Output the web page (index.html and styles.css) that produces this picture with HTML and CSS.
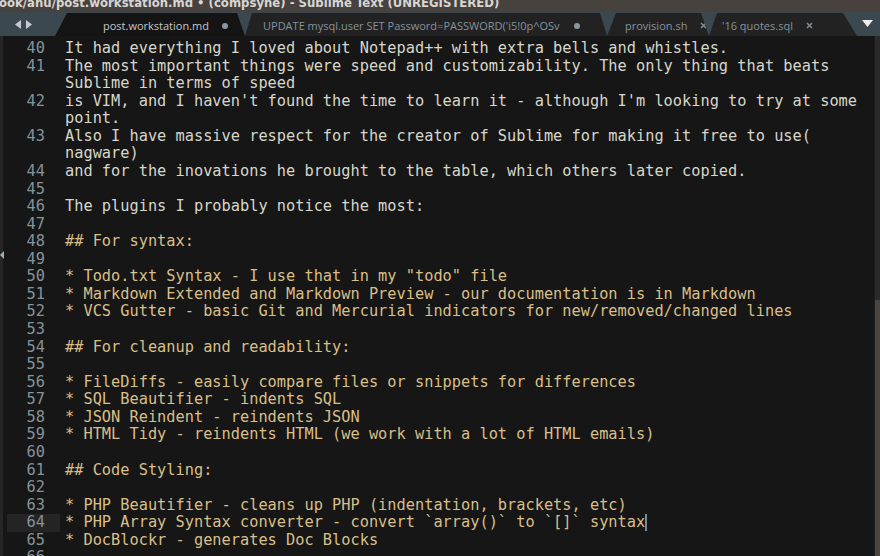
FILE: index.html
```html
<!DOCTYPE html>
<html lang="en">
<head>
<meta charset="utf-8">
<title>post.workstation.md - Sublime Text</title>
<link rel="stylesheet" href="styles.css">
</head>
<body>
<div class="window">
  <div class="titlebar"><span class="title">ook/anu/post.workstation.md • (compsyne) - Sublime Text (UNREGISTERED)</span></div>
  <div class="tabbar">
    <div class="nav">
      <svg width="20" height="10" viewBox="0 0 20 10"><polygon points="7,0 7,9 1,4.5" fill="#c3cbd0"/><polygon points="12,0 12,9 18,4.5" fill="#c3cbd0"/></svg>
    </div>
    <div class="tab t1 active"><span class="label">post.workstation.md</span><span class="dot"></span></div>
    <div class="tab t2"><span class="label">UPDATE mysql.user SET Password=PASSWORD('i5!0p^OSv</span><span class="dot"></span></div>
    <div class="tab t3"><span class="label">provision.sh</span><svg class="close" width="7" height="7" viewBox="0 0 7 7"><path d="M1 1L6 6M6 1L1 6" stroke="#7e8d96" stroke-width="1.6"/></svg></div>
    <div class="tab t4"><span class="label">'16 quotes.sql</span><svg class="close" width="7" height="7" viewBox="0 0 7 7"><path d="M1 1L6 6M6 1L1 6" stroke="#7e8d96" stroke-width="1.6"/></svg></div>
    <div class="menu">
      <svg width="11" height="8" viewBox="0 0 11 8"><polygon points="0,0 11,0 5.5,7" fill="#eef0f0"/></svg>
    </div>
  </div>
  <div class="main">
    <div class="leftedge"><span class="fold"></span></div>
    <div class="editor">
      <div class="row plain"><span class="ln">40</span><span class="code">It had everything I loved about Notepad++ with extra bells and whistles.</span></div>
      <div class="row plain"><span class="ln">41</span><span class="code">The most important things were speed and customizability. The only thing that beats</span></div>
      <div class="row plain"><span class="ln"></span><span class="code">Sublime in terms of speed</span></div>
      <div class="row plain"><span class="ln">42</span><span class="code">is VIM, and I haven't found the time to learn it - although I'm looking to try at some</span></div>
      <div class="row plain"><span class="ln"></span><span class="code">point.</span></div>
      <div class="row plain"><span class="ln">43</span><span class="code">Also I have massive respect for the creator of Sublime for making it free to use(</span></div>
      <div class="row plain"><span class="ln"></span><span class="code">nagware)</span></div>
      <div class="row plain"><span class="ln">44</span><span class="code">and for the inovations he brought to the table, which others later copied.</span></div>
      <div class="row plain"><span class="ln">45</span><span class="code"></span></div>
      <div class="row plain"><span class="ln">46</span><span class="code">The plugins I probably notice the most:</span></div>
      <div class="row plain"><span class="ln">47</span><span class="code"></span></div>
      <div class="row md"><span class="ln">48</span><span class="code">## For syntax:</span></div>
      <div class="row md"><span class="ln">49</span><span class="code"></span></div>
      <div class="row md"><span class="ln">50</span><span class="code">* Todo.txt Syntax - I use that in my "todo" file</span></div>
      <div class="row md"><span class="ln">51</span><span class="code">* Markdown Extended and Markdown Preview - our documentation is in Markdown</span></div>
      <div class="row md"><span class="ln">52</span><span class="code">* VCS Gutter - basic Git and Mercurial indicators for new/removed/changed lines</span></div>
      <div class="row md"><span class="ln">53</span><span class="code"></span></div>
      <div class="row md"><span class="ln">54</span><span class="code">## For cleanup and readability:</span></div>
      <div class="row md"><span class="ln">55</span><span class="code"></span></div>
      <div class="row md"><span class="ln">56</span><span class="code">* FileDiffs - easily compare files or snippets for differences</span></div>
      <div class="row md"><span class="ln">57</span><span class="code">* SQL Beautifier - indents SQL</span></div>
      <div class="row md"><span class="ln">58</span><span class="code">* JSON Reindent - reindents JSON</span></div>
      <div class="row md"><span class="ln">59</span><span class="code">* HTML Tidy - reindents HTML (we work with a lot of HTML emails)</span></div>
      <div class="row md"><span class="ln">60</span><span class="code"></span></div>
      <div class="row md"><span class="ln">61</span><span class="code">## Code Styling:</span></div>
      <div class="row md"><span class="ln">62</span><span class="code"></span></div>
      <div class="row md"><span class="ln">63</span><span class="code">* PHP Beautifier - cleans up PHP (indentation, brackets, etc)</span></div>
      <div class="row md current"><span class="ln">64</span><span class="code">* PHP Array Syntax converter - convert `array()` to `[]` syntax<span class="caret"></span></span></div>
      <div class="row md"><span class="ln">65</span><span class="code">* DocBlockr - generates Doc Blocks</span></div>
      <div class="row md"><span class="ln">66</span><span class="code"></span></div>
    </div>
    <div class="scrollbar"><div class="track"></div><div class="thumb"></div></div>
  </div>
</div>
</body>
</html>
```

FILE: styles.css
```css
html, body {
  margin: 0;
  padding: 0;
  background: #161616;
}
.window {
  width: 880px;
  height: 556px;
  overflow: hidden;
  display: flex;
  flex-direction: column;
  background: #161616;
}
.titlebar {
  height: 12px;
  flex: 0 0 12px;
  overflow: hidden;
  background: #48423e;
  white-space: nowrap;
}
.title {
  display: block;
  margin-top: -4px;
  margin-left: -1px;
  font-family: "DejaVu Sans", sans-serif;
  font-weight: bold;
  font-size: 11.7px;
  line-height: 14px;
  color: #d6d6d4;
}
.tabbar {
  height: 24px;
  flex: 0 0 24px;
  display: flex;
  align-items: flex-end;
  background: #3c4850;
}
.nav {
  width: 55px;
  height: 24px;
  flex: 0 0 55px;
  display: flex;
  align-items: center;
  padding-left: 14px;
  padding-top: 1px;
  box-sizing: border-box;
}
.nav svg { display: block; }
.tab {
  height: 23px;
  box-sizing: border-box;
  display: flex;
  align-items: center;
  padding-top: 2px;
  background: #222222;
  font-family: "Open Sans", sans-serif;
  font-size: 11px;
  color: #85939c;
  white-space: nowrap;
  overflow: hidden;
  clip-path: polygon(9px 0, calc(100% - 8px) 0, 100% 100%, 0 100%);
}
.tab.active {
  background: #141414;
  color: #c6c6c6;
}
.t1 { width: 190px; flex: 0 0 190px; padding-left: 48px; clip-path: polygon(12px 0, calc(100% - 8px) 0, 100% 100%, 0 100%); }
.t2 { width: 362px; flex: 0 0 362px; padding-left: 18px; clip-path: polygon(7px 0, calc(100% - 7px) 0, 100% 100%, 0 100%); }
.t3 { width: 102px; flex: 0 0 102px; padding-left: 18px; }
.t4 { width: 148px; flex: 0 0 148px; padding-left: 13px; clip-path: polygon(8px 0, calc(100% - 14px) 0, 100% 100%, 0 100%); }
.dot {
  width: 6px;
  height: 6px;
  border-radius: 50%;
  background: #8598a6;
  margin-left: 13px;
}
.t2 .dot { margin-left: 14px; }
.close { margin-left: 13px; display: block; }
.menu {
  flex: 1;
  height: 24px;
  display: flex;
  align-items: center;
  padding-left: 5px;
  padding-bottom: 1px;
  box-sizing: border-box;
}
.menu svg { display: block; }
.main {
  flex: 1;
  display: flex;
  min-height: 0;
}
.leftedge {
  width: 3px;
  flex: 0 0 3px;
  background: #262626;
  position: relative;
}
.fold {
  position: absolute;
  left: 0;
  top: 215px;
  width: 0;
  height: 0;
  border-top: 4px solid transparent;
  border-bottom: 4px solid transparent;
  border-right: 4px solid #9db0bc;
}
.editor {
  flex: 1;
  padding-top: 4px;
  padding-left: 4px;
  overflow: hidden;
  font-family: "DejaVu Sans Mono", monospace;
  font-size: 15.3px;
  line-height: 17.57px;
}
.row {
  display: flex;
  height: 17.57px;
  white-space: pre;
}
.ln {
  width: 53px;
  flex: 0 0 53px;
  box-sizing: border-box;
  padding-right: 15px;
  text-align: right;
  color: #84939b;
}
.current .ln { background: #242424; }
.code { padding-left: 5px; }
.plain .code { color: #d6d6cb; }
.md .code { color: #d9bf88; }
.caret {
  display: inline-block;
  width: 2px;
  height: 17px;
  vertical-align: top;
  background: #6b8ea0;
}
.scrollbar {
  width: 6px;
  flex: 0 0 6px;
  display: flex;
  flex-direction: column;
  border-left: 1px solid #1d1d1d;
  box-sizing: border-box;
}
.track {
  height: 264px;
  flex: 0 0 264px;
  background: #2a2a2a;
}
.thumb {
  flex: 1;
  background: #4b4440;
}
```
